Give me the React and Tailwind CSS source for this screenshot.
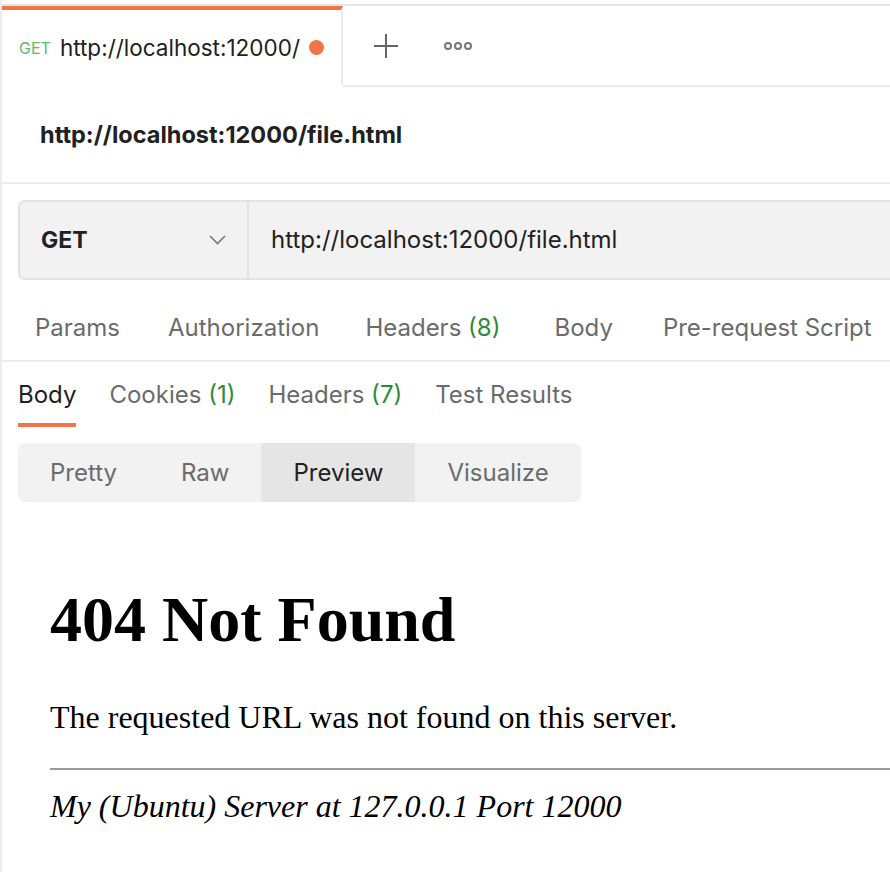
import React from 'react';

const ui = { fontFamily: 'Inter, "Noto Sans", sans-serif' };
const serif = { fontFamily: '"Liberation Serif", "Times New Roman", serif' };

function Count({ n }) {
  return <span className="text-[#2f8a3a]">({n})</span>;
}

export default function App() {
  const reqTabs = [
    { label: 'Params', cls: '' },
    { label: 'Authorization', cls: 'ml-[48px]' },
    { label: 'Headers', count: 8, cls: 'ml-[46px]' },
    { label: 'Body', cls: 'ml-[54px]' },
    { label: 'Pre-request Script', cls: 'ml-[50px]' },
  ];
  const resTabs = [
    { label: 'Body', active: true },
    { label: 'Cookies', count: 1 },
    { label: 'Headers', count: 7 },
    { label: 'Test Results' },
  ];
  const modes = ['Pretty', 'Raw', 'Preview', 'Visualize'];

  return (
    <div className="w-[890px] h-[872px] overflow-hidden bg-white border-l-2 border-[#ededed]" style={ui}>
      {/* tab strip */}
      <div className="pt-[4px]">
        <div className="flex h-[81px] border-t-2 border-[#e6e6e6]">
          <div className="w-[341px] shrink-0 flex items-center border-t-4 border-[#ef7547] border-r-2 border-r-[#ebebeb] pl-[17px] pr-[17px]">
            <span className="text-[16px] text-[#5bbb6b] mr-[9px]">GET</span>
            <span className="text-[22.5px] text-[#212121] whitespace-nowrap">http://localhost:12000/</span>
            <span className="ml-auto w-[15px] h-[15px] rounded-full bg-[#ef7547]" />
          </div>
          <div className="flex-1 flex items-center border-b-2 border-[#ebebeb] -mb-[2px]">
            <svg width="24" height="24" viewBox="0 0 24 24" className="ml-[31px] text-[#666]">
              <path d="M12 0v24M0 12h24" stroke="currentColor" strokeWidth="2" fill="none" />
            </svg>
            <svg width="28" height="10" viewBox="0 0 28 10" className="ml-[46px] text-[#777]">
              <circle cx="4" cy="5" r="3" stroke="currentColor" strokeWidth="2" fill="none" />
              <circle cx="14" cy="5" r="3" stroke="currentColor" strokeWidth="2" fill="none" />
              <circle cx="24" cy="5" r="3" stroke="currentColor" strokeWidth="2" fill="none" />
            </svg>
          </div>
        </div>
      </div>

      {/* request name */}
      <div className="h-[99px] flex items-center pl-[38px] border-b-2 border-[#ebebeb]">
        <span className="text-[23.5px] font-bold text-[#212121] mt-[2px]">http://localhost:12000/file.html</span>
      </div>

      {/* url bar */}
      <div className="pt-[16px] pl-[16px]">
        <div className="flex h-[80px] w-[900px] bg-[#f2f2f2] border-2 border-[#e3e3e3] rounded-[7px]">
          <div className="w-[229px] shrink-0 flex items-center pl-[21px] pr-[21px] border-r-2 border-[#e3e3e3]">
            <span className="text-[23px] font-bold text-[#212121]">GET</span>
            <svg width="17" height="10" viewBox="0 0 17 10" className="ml-auto text-[#777]">
              <path d="M1 1l7.5 7.5L16 1" stroke="currentColor" strokeWidth="1.6" fill="none" />
            </svg>
          </div>
          <div className="flex items-center pl-[22px] text-[24px] text-[#212121] whitespace-nowrap">http://localhost:12000/file.html</div>
        </div>
      </div>

      {/* request tabs */}
      <div className="h-[82px] pt-[16px] flex items-center pl-[33px] border-b-2 border-[#ebebeb] whitespace-nowrap text-[24px] text-[#6b6b6b]">
        {reqTabs.map((t) => (
          <span key={t.label} className={t.cls}>
            {t.label}
            {t.count != null && <> <Count n={t.count} /></>}
          </span>
        ))}
      </div>

      {/* response tabs */}
      <div className="flex gap-[33px] pl-[16px] pt-[17px] text-[24px] whitespace-nowrap">
        {resTabs.map((t) => (
          <div key={t.label} className={'flex flex-col ' + (t.active ? 'text-[#212121]' : 'text-[#6b6b6b]')}>
            <span className="leading-[32px]">
              {t.label}
              {t.count != null && <> <Count n={t.count} /></>}
            </span>
            <span className={'mt-[12px] h-[4px] ' + (t.active ? 'bg-[#ef7547]' : '')} />
          </div>
        ))}
      </div>

      {/* view modes */}
      <div className="pt-[16px] pl-[16px]">
        <div className="inline-flex h-[59px] bg-[#f2f2f2] rounded-[7px] overflow-hidden text-[24px]">
          {modes.map((m) => (
            <div
              key={m}
              className={'flex items-center px-[32px] ' + (m === 'Preview' ? 'bg-[#e5e5e5] text-[#212121]' : 'text-[#6b6b6b]')}
            >
              {m}
            </div>
          ))}
        </div>
      </div>

      {/* preview */}
      <div className="pt-[23px] pl-[32px]" style={serif}>
        <div className="p-[16px] pr-0 text-black text-[32px]">
          <h1 className="text-[64px] font-bold leading-[71px] mt-[43px] mb-[44px]">404 Not Found</h1>
          <p className="leading-[36px] mb-[33px]">The requested URL was not found on this server.</p>
          <hr className="border-0 border-t-2 border-[#9a9a9a] mb-[18px]" />
          <address className="italic leading-[36px]">My (Ubuntu) Server at 127.0.0.1 Port 12000</address>
        </div>
      </div>
    </div>
  );
}
